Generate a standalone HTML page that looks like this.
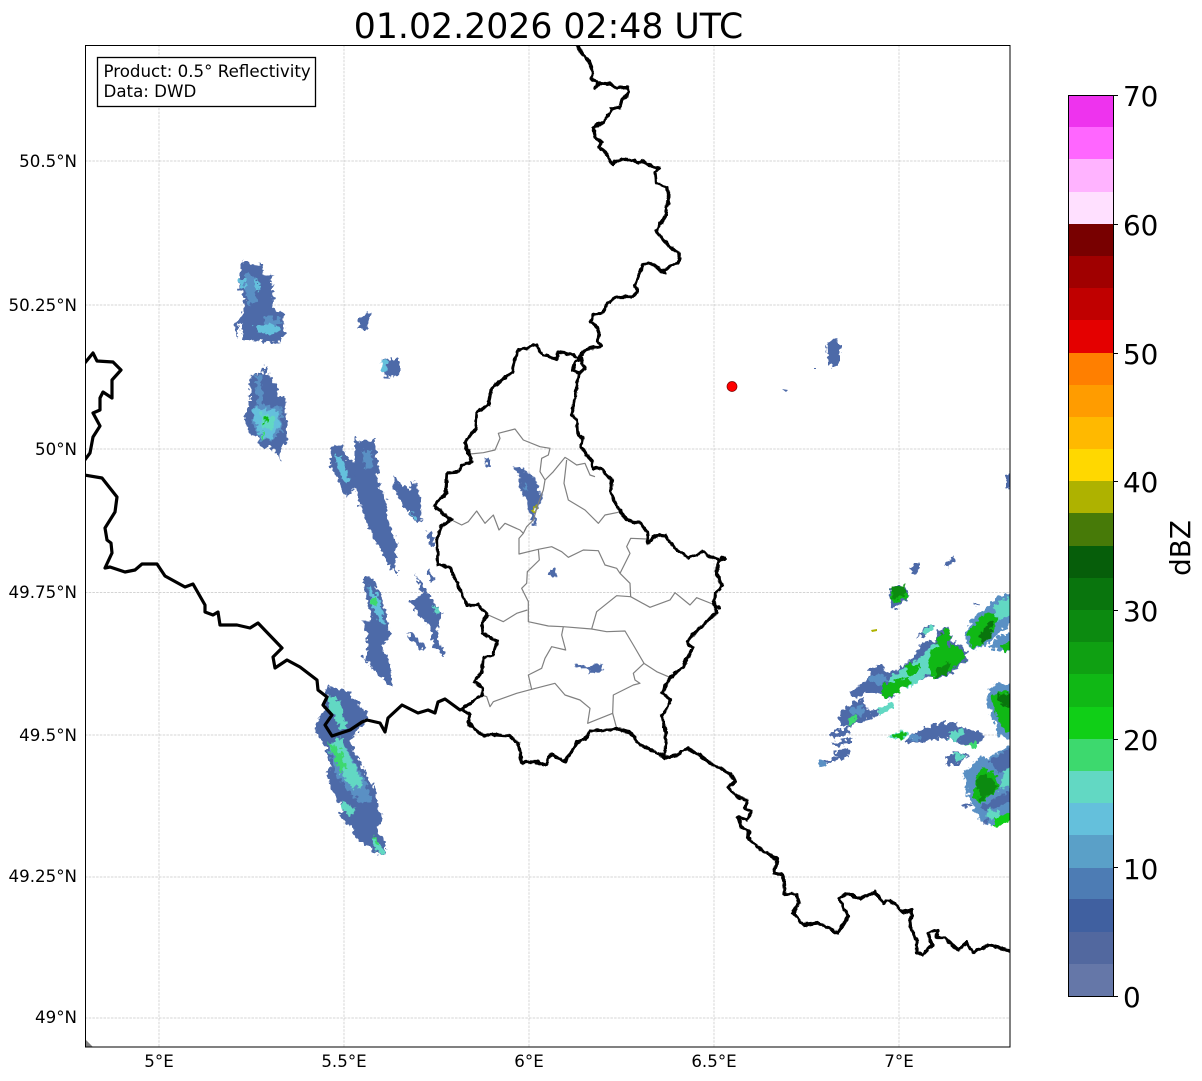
<!DOCTYPE html>
<html><head><meta charset="utf-8"><title>Radar</title>
<style>
html,body{margin:0;padding:0;background:#fff;width:1202px;height:1081px;overflow:hidden}
svg{display:block;font-family:"DejaVu Sans",sans-serif}
.b{fill:#4d6aa8}.m{fill:#5a90c4}.l{fill:#64c0dc}.c{fill:#62d8c3}.g{fill:#3dd96e}.n{fill:#10b815}.d{fill:#0c8a10}.e{fill:#09750d}
.grid line{stroke:#c6c6c6;stroke-width:.7;stroke-dasharray:2.5 1.2}
.bd{fill:none;stroke:#000;stroke-width:3.2;stroke-linejoin:round;stroke-linecap:round}
.cant{fill:none;stroke:#808080;stroke-width:3.6;stroke-linejoin:round}
</style></head><body>
<svg width="1202" height="1081" viewBox="0 0 1202 1081" xmlns="http://www.w3.org/2000/svg">
<defs>
<clipPath id="ax"><rect x="85" y="45" width="925" height="1002"/></clipPath>
<filter id="jag" filterUnits="userSpaceOnUse" x="85" y="45" width="960" height="1002" color-interpolation-filters="sRGB">
<feTurbulence type="fractalNoise" baseFrequency="0.22" numOctaves="2" seed="4" result="t"/>
<feDisplacementMap in="SourceGraphic" in2="t" scale="9" xChannelSelector="R" yChannelSelector="G"/>
</filter>
<filter id="wig" filterUnits="userSpaceOnUse" x="85" y="45" width="960" height="1002" color-interpolation-filters="sRGB">
<feTurbulence type="fractalNoise" baseFrequency="0.16" numOctaves="2" seed="9" result="t"/>
<feDisplacementMap in="SourceGraphic" in2="t" scale="4" xChannelSelector="R" yChannelSelector="G"/>
</filter>
</defs>
<rect width="1202" height="1081" fill="#fff"/>
<text x="548.500" y="38" font-size="34.7" text-anchor="middle">01.02.2026 02:48 UTC</text>
<g clip-path="url(#ax)">
<g class="grid">
<line x1="85" x2="1010" y1="161" y2="161"/><line x1="85" x2="1010" y1="305" y2="305"/><line x1="85" x2="1010" y1="449" y2="449"/><line x1="85" x2="1010" y1="592.500" y2="592.500"/><line x1="85" x2="1010" y1="735" y2="735"/><line x1="85" x2="1010" y1="877" y2="877"/><line x1="85" x2="1010" y1="1018" y2="1018"/>
<line y1="45" y2="1047" x1="159" x2="159"/><line y1="45" y2="1047" x1="344" x2="344"/><line y1="45" y2="1047" x1="529" x2="529"/><line y1="45" y2="1047" x1="714" x2="714"/><line y1="45" y2="1047" x1="899" x2="899"/>
</g>
<polygon points="85,1039 93,1047 85,1047" fill="#808080"/>
<g filter="url(#jag)">
<!-- radar NW -->
<g transform="translate(220 250) scale(.33333)">
<polygon class="b" points="68,30 85,38 95,45 125,42 130,70 155,75 160,180 190,185 195,250 180,278 65,268 62,215 50,265 42,220 55,215 65,190 75,150 55,110 60,60"/>
<polygon class="l" points="52,90 115,90 118,120 100,125 60,110"/><polygon class="m" points="75,70 100,70 110,150 85,165 75,120"/><polygon class="l" points="105,225 175,225 175,250 110,250"/><polygon class="m" points="130,200 185,205 185,225 135,225"/>
<polygon class="b" points="130,348 140,348 140,372 155,375 157,395 170,398 175,440 195,445 198,512 203,515 200,585 183,590 178,635 170,610 145,590 125,590 110,560 85,548 75,500 88,450 90,375 105,372 130,370"/>
<polygon class="m" points="105,375 125,375 130,470 185,470 185,540 160,570 120,570 100,525 95,475 115,470"/><polygon class="l" points="95,475 175,480 178,530 155,565 125,565 105,520"/><polygon class="c" points="120,490 160,495 160,540 125,540"/><rect class="n" x="132" y="498" width="13" height="20"/><rect class="g" x="125" y="545" width="10" height="25"/>
<polygon class="b" points="415,205 440,190 452,188 440,240 415,240"/>
<polygon class="b" points="485,325 540,330 540,370 520,380 490,380"/><polygon class="l" points="485,330 500,330 500,365 487,365"/>
<polygon class="b" points="332,590 345,585 365,590 380,625 410,640 430,700 400,720 380,740 355,690 333,650"/><polygon class="l" points="345,610 365,620 390,695 375,700 350,650"/>
<polygon class="b" points="405,555 415,575 460,570 478,660 470,680 505,770 500,790 530,885 525,960 515,960 470,880 440,820 410,740 405,680 405,610"/><polygon class="m" points="425,600 455,600 460,650 435,660"/>
<polygon class="b" points="518,670 530,690 570,720 575,690 595,710 607,812 590,820 545,760 520,710"/><polygon class="l" points="570,785 590,800 585,808"/>
<polygon class="b" points="617,845 635,842 645,890 635,893"/>
</g>
<!-- radar Lorraine -->
<g transform="translate(300 570) scale(.33333)">
<polygon class="b" points="190,30 205,15 240,60 260,130 268,175 270,200 245,225 270,290 278,345 265,345 190,265 205,230 200,185 190,155 215,150 205,110 195,60"/>
<polygon class="l" points="205,50 235,80 255,160 240,160 215,110"/><polygon class="g" points="212,85 230,85 230,105 215,105"/>
<polygon class="b" points="345,10 370,50 395,85 420,125 430,130 410,180 420,225 438,258 430,258 395,215 390,170 345,120 325,90 345,90 365,70"/><polygon class="c" points="400,105 420,120 410,135"/>
<polygon class="b" points="385,0 408,30 395,38 380,10"/><polygon class="b" points="325,190 340,190 375,230 365,240 330,210"/><polygon class="b" points="283,0 293,0 291,12 287,12"/>
<polygon class="b" points="80,350 115,352 150,370 208,440 170,490 150,510 180,580 225,660 235,710 250,750 230,770 255,820 258,850 240,855 175,810 150,770 115,730 130,715 85,640 80,605 95,590 75,530 47,480 55,440 75,420"/>
<polygon class="m" points="85,530 130,520 200,640 215,690 180,700 110,620"/>
<polygon class="c" points="85,380 120,390 140,470 125,480 90,420"/><polygon class="c" points="85,525 120,500 190,640 160,660 130,620"/><polygon class="g" points="85,520 115,530 140,590 120,610"/>
<polygon class="c" points="130,690 170,720 150,740 125,715"/><polygon class="c" points="220,800 245,830 258,845 240,855 220,825"/><polygon class="g" points="218,797 240,820 232,825"/>
</g>
<!-- radar Lux -->
<g transform="translate(420 330) scale(.33333)">
<polygon class="b" points="280,410 300,410 345,445 362,490 365,515 345,540 350,585 340,585 325,540 325,515 305,490 298,440"/>
<polygon class="m" points="310,465 322,465 322,480 312,480"/><polygon fill="#aeb200" points="338,525 348,525 345,550 340,545"/>
<polygon class="b" points="197,385 207,385 205,410 200,410"/><polygon class="b" points="385,725 400,712 407,720 405,742 395,735"/><polygon class="b" points="460,1000 510,1012 520,1000 548,1005 545,1028 510,1030 505,1020 465,1010"/>
</g>
<!-- radar East -->
<polygon class="m" points="963,773 983,760 1012,745 1012,812 993,827 980,820 968,797"/>
<g transform="translate(810 570) scale(.33333)">
<polygon class="b" points="235,65 270,40 290,55 295,75 295,85 255,118 245,105 240,80"/><polygon class="n" points="240,65 280,45 295,80 250,100"/><polygon class="d" points="245,55 285,45 290,70 250,90"/>
<polygon class="b" points="305,12 325,0 318,8 310,17"/>
<polygon class="b" points="120,365 150,345 175,325 180,295 220,285 230,310 270,295 320,250 335,215 380,210 385,180 415,170 425,210 470,240 470,270 430,305 390,325 360,320 320,335 270,360 235,390 215,370 180,370 150,375 125,385"/>
<polygon class="c" points="230,330 290,290 340,260 360,225 400,220 420,260 400,300 360,310 310,345 260,360"/><polygon class="m" points="180,310 230,320 225,345 185,340"/>
<polygon class="n" points="220,345 300,320 300,340 235,385 215,375"/><polygon class="n" points="290,280 330,285 315,315 290,315"/><polygon class="n" points="360,240 440,225 470,260 420,305 370,325 355,290"/><polygon class="d" points="385,290 420,280 410,310 375,325"/><polygon class="d" points="390,190 415,190 405,220 390,215"/><polygon class="n" points="380,210 405,175 420,185 415,230 385,240"/>
<polygon class="b" points="320,205 355,165 375,165 350,195"/><polygon class="c" points="335,190 365,165 375,170 350,195"/>
<polygon class="m" points="465,185 490,145 530,110 565,80 600,70 610,150 575,185 530,225 490,240 465,210"/><polygon class="n" points="470,190 520,130 560,130 555,175 515,225 490,235"/><polygon class="e" points="510,190 545,150 545,200 515,220"/><polygon class="c" points="550,105 610,75 610,130 560,150"/>
<polygon class="b" points="490,105 505,97 505,105 495,112"/>
<polygon class="m" points="540,230 565,195 610,190 610,245 575,245 545,238"/><polygon class="n" points="570,225 610,215 610,240 580,245"/>
<polygon class="b" points="85,435 130,395 160,385 175,420 205,425 200,440 160,455 120,470 95,465"/><polygon class="m" points="120,410 160,410 160,435 125,440"/><polygon class="g" points="110,445 145,440 140,460 115,465"/><polygon class="c" points="200,420 245,395 248,410 210,440"/>
<polygon class="b" points="60,490 120,470 120,490 70,510"/><polygon class="b" points="70,520 125,505 130,515 75,530"/><polygon class="b" points="75,545 115,530 120,555 80,560"/><polygon class="b" points="40,575 115,550 115,560 50,580"/><polygon class="m" points="25,575 45,572 48,588 28,590"/>
<polygon class="c" points="232,500 265,485 295,490 280,505 240,508"/><polygon class="n" points="250,492 290,487 275,505 252,505"/>
<polygon class="b" points="285,520 310,490 385,458 440,458 445,475 500,480 525,505 490,530 465,525 420,510 390,505 320,520"/><polygon class="c" points="415,485 465,480 440,515 420,510"/><polygon class="m" points="300,495 330,495 330,515 305,515"/><polygon class="g" points="490,515 505,520 490,535 470,525"/>
<polygon class="b" points="405,565 440,545 480,555 440,585 410,585"/><polygon class="c" points="430,550 450,548 470,560 440,575"/>
<polygon class="m" points="530,365 570,338 610,345 610,740 550,770 515,750 495,700 470,670 480,630 460,610 490,580 510,560 540,575 570,550 610,530 610,510 565,500 560,470 535,410"/>
<polygon class="n" points="545,380 585,360 610,375 610,500 575,470 555,430"/><polygon class="e" points="555,375 610,370 610,420 570,400"/>
<polygon class="n" points="490,680 500,615 520,590 560,620 570,650 510,700"/><polygon class="d" points="495,625 530,610 565,650 510,695"/>
<polygon class="c" points="580,600 610,590 610,640 570,660"/><polygon class="b" points="510,710 610,660 610,690 530,725"/><polygon class="b" points="540,570 610,530 610,590 560,610"/>
<polygon class="c" points="530,710 570,730 570,755 535,745"/><polygon fill="#10cf17" points="550,745 610,725 610,750 555,770"/>
<polygon class="b" points="458,705 480,697 480,708 460,715"/><polygon class="b" points="515,755 535,748 537,755 518,764"/>
</g>
<g class="b"><polygon points="1007,477 1012,470 1012,490 1007,488"/><polygon points="910,568 920,562 920,570 913,576"/><polygon points="945,564 955,555 955,560 947,568"/><polygon points="827,345 835,338 840,345 840,362 832,368 828,360"/><polygon points="485,458 490,458 489,467 487,467"/><polygon points="548,570 555,568 556,577 551,574"/></g>
</g>
<polygon fill="#aeb200" points="871,630 877,629 877,631 872,632"/>
<polygon class="b" points="782,389 788,390 786,392"/><polygon class="b" points="814,368 816,368 816,369 814,369"/>
<!-- cantons -->
<g transform="translate(420 330) scale(.33333)" class="cant">
<polyline points="150,372 190,368 225,360 240,325 235,310 285,297 310,330 360,350 390,355 385,375 365,385 360,425 375,450 370,480 355,520 340,570 320,590 310,610"/>
<polyline points="95,570 125,585 145,575 170,543 195,580 220,555 237,600 255,580 300,600 310,610 297,625 297,672 355,658 395,650 425,665 445,682 490,660 535,662 555,705 590,715 600,730 630,760 632,800"/>
<polyline points="375,450 400,425 435,382 445,388 470,405 495,400 510,435 525,440"/>
<polyline points="440,390 432,460 445,510 495,540 535,580 555,555 595,547"/>
<polyline points="600,730 630,670 620,650 632,625 680,627"/>
<polyline points="355,658 358,690 322,725 320,760 305,775 325,815 325,875 385,888 430,890 515,897 560,905 615,903 640,945 672,1000 710,1025 745,1040"/>
<polyline points="515,897 530,845 590,797 632,800 690,832 750,810 765,788 810,825 830,803 885,825"/>
<polyline points="205,855 250,875 290,850 322,840"/>
<polyline points="430,890 425,915 437,960 395,950 375,985 365,1015 325,1035 335,1078 405,1060 435,1095 480,1110 510,1135 503,1180 578,1150 590,1195"/>
<polyline points="335,1078 290,1090 220,1115 210,1130 200,1100 185,1095"/>
<polyline points="672,1000 640,1030 645,1050 660,1060 640,1065 580,1095 578,1150"/>
</g>
<!-- borders -->
<g class="bd" filter="url(#wig)">
<polyline points="578,46 583,55 589,62 593,73 591,78 597,83 595,88 600,83 610,84 617,88 627,87 629,91 622,100 620,107 612,109 603,122 593,128 595,137 602,142 598,147 605,152 612,164 622,159 628,159 638,163 643,161 653,167 659,168 655,172 656,183 667,187 669,197 666,210 666,215 656,231 665,242 677,252 680,258 678,263 663,270 664,273 651,263 643,265 635,285 637,292 632,297 617,297 607,303 603,313 593,315 591,322 597,327 599,333 598,342 601,346 585,350 583,352 580,357 581,360 585,369 580,373 573,371 575,362 581,360 573,355 558,352 557,359 543,355 537,345 518,350 512,372 492,388 488,405 477,412 476,428 465,443 472,462 462,465 458,472 447,473 446,493 434,506 451,520 440,527 437,540 438,565 450,567 467,605 478,605 488,615 482,623 483,633 497,642 493,655 483,658 482,672 474,682 483,688 482,695 462,709 470,715 468,723 482,735 497,735 510,736 518,743 522,762 538,762 545,765 551,754 565,762 577,742 585,740 590,731 617,729 630,732 640,745 662,755 665,758 677,755 687,748 700,755 710,763 730,773 735,781 728,787 737,797 747,800 745,808 752,811 747,820 738,817 741,827 749,831 748,837 757,847 777,859 774,873 783,875 785,895 797,894 799,903 793,913 803,925 818,923 838,933 848,917 839,898 847,893 860,899 875,892 883,903 890,900 903,912 912,910 910,927 917,940 917,952 922,955 932,945 928,933 938,930 937,938 945,938 958,950 967,943 973,953 988,945 1003,949 1012,952"/>
<polyline points="579,373 575,397 573,410 571,415 577,420 578,435 583,438 581,447 592,462 593,469 598,467 612,480 610,492 617,507 627,520 640,523 647,532 648,543 657,535 665,536 677,550 688,558 703,552 713,558 720,560 725,558 722,557 718,563 717,573 722,587 715,593 714,605 720,608 714,606 717,613 697,630 687,642 693,647 683,667 670,678 662,693 671,700 662,717 666,733 665,758"/>
</g>
<g class="bd">
<polyline points="84,364 93,353 97,361 113,362 121,370 112,380 112,398 103,392 100,398 100,410 93,413 100,426 93,437 90,453 84,461"/>
<polyline points="84,475 102,478 117,497 115,512 105,528 107,540 111,543 112,553 105,568 110,567 125,572 135,570 142,564 157,564 165,576 185,587 193,584 205,605 205,612 213,615 218,612 220,625 237,625 250,628 258,623 282,648 273,657 275,668 287,660 300,667 317,680 318,690 327,697 323,705 332,715 325,725 332,736 350,730 362,722 367,720 380,723 385,732 388,718 402,705 418,713 428,710 435,713 438,702 445,699 460,710 462,709"/>
</g>
<circle cx="732" cy="386.500" r="5" fill="#ff0000" stroke="#7a0000" stroke-width=".7"/>
<rect x="97.500" y="57.500" width="218" height="49" fill="#fff" stroke="#000" stroke-width="1.3"/>
<text x="103.500" y="77" font-size="16.67">Product: 0.5° Reflectivity</text>
<text x="103.500" y="97" font-size="16.67">Data: DWD</text>
</g>
<rect x="85.500" y="45.500" width="924.500" height="1001.500" fill="none" stroke="#000" stroke-width="1"/>
<!-- axis labels -->
<g font-size="16.67" text-anchor="end">
<text x="77" y="167">50.5°N</text><text x="77" y="311">50.25°N</text><text x="77" y="455">50°N</text><text x="77" y="598">49.75°N</text><text x="77" y="741">49.5°N</text><text x="77" y="882">49.25°N</text><text x="77" y="1023">49°N</text>
</g>
<g font-size="16.67" text-anchor="middle">
<text x="159" y="1067">5°E</text><text x="344" y="1067">5.5°E</text><text x="529" y="1067">6°E</text><text x="714" y="1067">6.5°E</text><text x="899" y="1067">7°E</text>
</g>
<!-- colorbar -->
<g shape-rendering="crispEdges">
<rect x="1068" y="95" width="45" height="32.500" fill="#ee33ee"/><rect x="1068" y="127" width="45" height="32.500" fill="#ff66ff"/><rect x="1068" y="159" width="45" height="33" fill="#ffb3ff"/><rect x="1068" y="192" width="45" height="32.500" fill="#ffe0ff"/>
<rect x="1068" y="224" width="45" height="32" fill="#780000"/><rect x="1068" y="256" width="45" height="32" fill="#a00000"/><rect x="1068" y="288" width="45" height="32" fill="#c00000"/><rect x="1068" y="320" width="45" height="33" fill="#e40000"/>
<rect x="1068" y="353" width="45" height="32" fill="#ff7f00"/><rect x="1068" y="385" width="45" height="32" fill="#ff9c00"/><rect x="1068" y="417" width="45" height="32" fill="#ffb900"/><rect x="1068" y="449" width="45" height="32" fill="#ffd800"/>
<rect x="1068" y="481" width="45" height="32" fill="#aeb200"/><rect x="1068" y="513" width="45" height="33" fill="#477a08"/><rect x="1068" y="546" width="45" height="32" fill="#065e0a"/><rect x="1068" y="578" width="45" height="32" fill="#09750d"/>
<rect x="1068" y="610" width="45" height="32" fill="#0c8a10"/><rect x="1068" y="642" width="45" height="32" fill="#0fa012"/><rect x="1068" y="674" width="45" height="33" fill="#10b815"/><rect x="1068" y="707" width="45" height="32" fill="#10cf17"/>
<rect x="1068" y="739" width="45" height="32" fill="#3dd96e"/><rect x="1068" y="771" width="45" height="32" fill="#62d8c3"/><rect x="1068" y="803" width="45" height="32" fill="#64c0dc"/><rect x="1068" y="835" width="45" height="33" fill="#5aa0c8"/>
<rect x="1068" y="868" width="45" height="31" fill="#4d7cb4"/><rect x="1068" y="899" width="45" height="33" fill="#4060a0"/><rect x="1068" y="932" width="45" height="32" fill="#52689f"/><rect x="1068" y="964" width="45" height="32" fill="#6577a8"/>
</g>
<rect x="1068.500" y="95.500" width="45" height="901" fill="none" stroke="#000" stroke-width="1"/>
<g stroke="#000" stroke-width="1"><line x1="1113" x2="1118" y1="95.500" y2="95.500"/><line x1="1113" x2="1118" y1="224.500" y2="224.500"/><line x1="1113" x2="1118" y1="353.500" y2="353.500"/><line x1="1113" x2="1118" y1="481.500" y2="481.500"/><line x1="1113" x2="1118" y1="610.500" y2="610.500"/><line x1="1113" x2="1118" y1="739.500" y2="739.500"/><line x1="1113" x2="1118" y1="867.500" y2="867.500"/><line x1="1113" x2="1118" y1="996.500" y2="996.500"/></g>
<g font-size="27.800">
<text x="1123" y="106">70</text><text x="1123" y="235">60</text><text x="1123" y="364">50</text><text x="1123" y="492">40</text><text x="1123" y="621">30</text><text x="1123" y="750">20</text><text x="1123" y="879">10</text><text x="1123" y="1007">0</text>
</g>
<text transform="translate(1190 548) rotate(-90)" font-size="27.800" text-anchor="middle">dBZ</text>
</svg>
</body></html>
